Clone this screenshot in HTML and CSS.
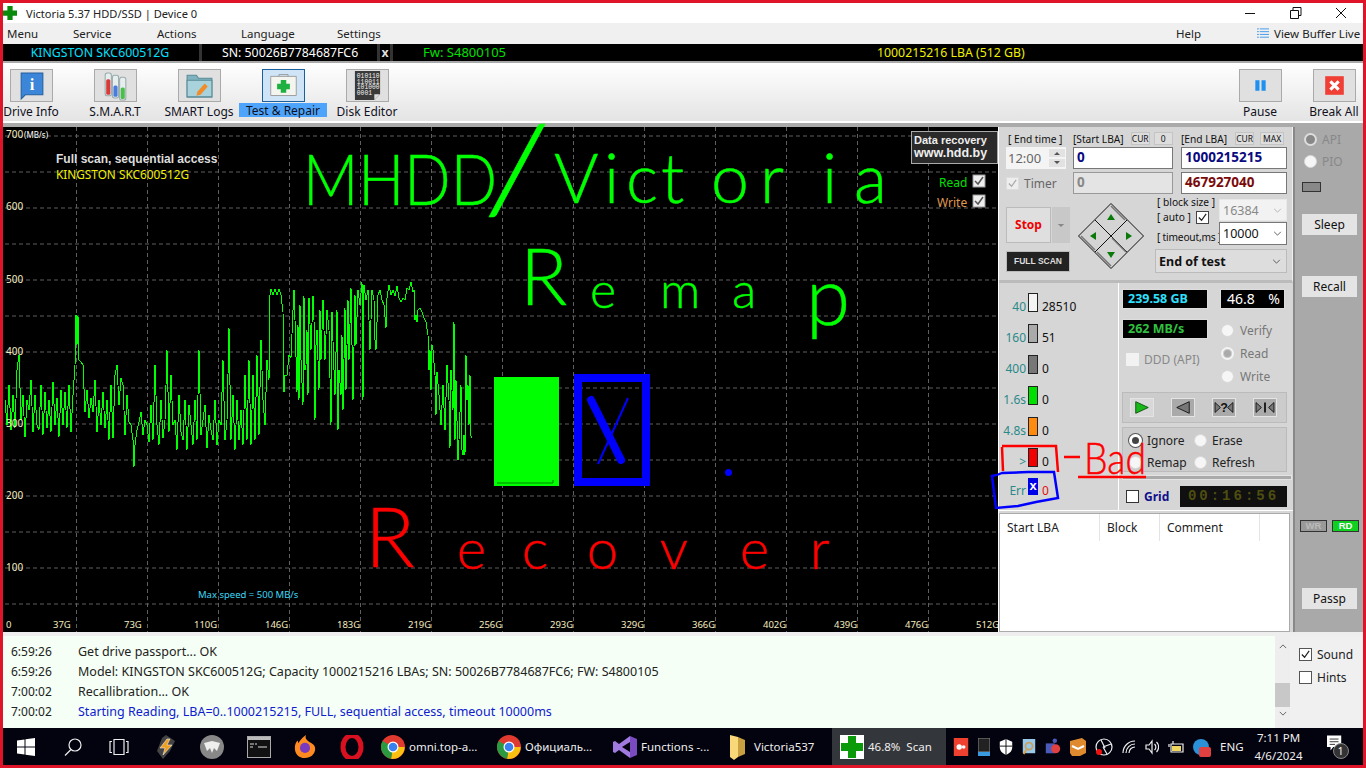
FILE: index.html
```html
<!DOCTYPE html>
<html lang="en">
<head>
<meta charset="utf-8">
<title>Victoria 5.37 HDD/SSD</title>
<link rel="stylesheet" href="styles.css">
</head>
<body>
<div class="titlebar">
  <svg class="appicon" viewBox="0 0 16 16"><path class="cross-dk" d="M5 0h6v5h5v6h-5v5H5v-5H0V5h5z"/></svg>
  <span class="title">Victoria 5.37 HDD/SSD | Device 0</span>
  <svg class="winbtns" viewBox="0 0 140 20"><path class="wb" d="M22 10.500h10M70 7.500V4.500h8v8h-3M67.500 7.500h8v8h-8zM113 5l10 10M123 5l-10 10"/></svg>
</div>
<div class="menubar">
  <span class="m m1">Menu</span><span class="m m2">Service</span><span class="m m3">Actions</span><span class="m m4">Language</span><span class="m m5">Settings</span>
  <span class="m help">Help</span>
  <svg class="listicon" viewBox="0 0 13 13"><path class="li" d="M0 1.500h2M3 1.500h10M0 4.500h2M3 4.500h10M0 7.500h2M3 7.500h10M0 10.500h2M3 10.500h10"/></svg>
  <span class="m vbl">View Buffer Live</span>
</div>
<div class="infobar">
  <span class="i-model">KINGSTON SKC600512G</span>
  <span class="i-sn">SN: 50026B7784687FC6</span>
  <span class="i-x">x</span>
  <span class="i-fw">Fw: S4800105</span>
  <span class="i-lba">1000215216 LBA (512 GB)</span>
</div>
<div class="rule"></div>
<div class="toolbar">
  <div class="tool t1"><div class="tbtn"><svg viewBox="0 0 30 30"><path class="ic-bubble" d="M5 3h21v21H9l-4 4z"/><text x="15.500" y="19" class="ic-i">i</text></svg></div><span>Drive Info</span></div>
  <div class="tool t2"><div class="tbtn"><svg viewBox="0 0 30 30"><rect class="tube" x="5" y="3" width="6" height="22" rx="2"/><rect class="tube-r" x="6" y="9" width="4" height="15" rx="1.500"/><rect class="tube" x="12" y="5" width="6" height="22" rx="2"/><rect class="tube-b" x="13" y="15" width="4" height="11" rx="1.500"/><rect class="tube" x="19" y="7" width="6" height="22" rx="2"/><rect class="tube-g" x="20" y="17" width="4" height="11" rx="1.500"/></svg></div><span>S.M.A.R.T</span></div>
  <div class="tool t3"><div class="tbtn"><svg viewBox="0 0 30 30"><path class="fold-b" d="M3 5h9l2 3h13v18H3z"/><path class="fold-f" d="M3 10h24v16H3z"/><path class="pencil" d="M20 13l3 3-7 8-4 1 1-4z"/></svg></div><span>SMART Logs</span></div>
  <div class="tool t4"><div class="tbtn sel"><svg viewBox="0 0 34 30"><path class="kit" d="M3 5h28v21H3z"/><path class="kit-h" d="M12 5V3h10v2"/><path class="kit-c" d="M14 9h6v4h4v6h-4v4h-6v-4h-4v-6h4z"/></svg></div><span class="lbl-sel">Test &amp; Repair</span></div>
  <div class="tool t5"><div class="tbtn"><svg viewBox="0 0 32 32"><path class="chip" d="M3 1h26v24l-6 6H3z"/><text class="chip-t" x="5" y="8">010110</text><text class="chip-t" x="5" y="14">110011</text><text class="chip-t" x="5" y="20">101000</text><text class="chip-t" x="5" y="26">0001</text><path class="chip-c" d="M23 31v-6h6z"/></svg></div><span>Disk Editor</span></div>
  <div class="tool t6"><div class="tbtn"><svg viewBox="0 0 30 30"><path class="pause" d="M10 10h4v10h-4zM16 10h4v10h-4z"/></svg></div><span>Pause</span></div>
  <div class="tool t7"><div class="tbtn"><svg viewBox="0 0 30 30"><rect class="brk" x="6" y="6" width="18" height="18"/><path class="brk-x" d="M11 11l8 8M19 11l-8 8"/></svg></div><span>Break All</span></div>
</div>
<div class="toolrule"></div>
<div class="main">
  <div class="chart">
    <svg class="chartsvg" viewBox="3 127 995 505">
      <path class="grid" d="M5 136H998M5 172H998M5 208H998M5 244H998M5 280H998M5 316H998M5 352H998M5 388H998M5 424H998M5 460H998M5 496H998M5 532H998M5 568H998M5 604H998M76.500 127V632M147.500 127V632M218.500 127V632M289.500 127V632M360.500 127V632M431.500 127V632M502.500 127V632M573.500 127V632M644.500 127V632M715.500 127V632M786.500 127V632M857.500 127V632M928.500 127V632"/>
      <polyline class="graph" points="5,400 7,425 9,385 11,430 13,395 15,428 17,370 19,355 21,420 23,395 25,437 27,400 29,410 31,380 33,432 35,395 37,425 39,430 41,385 43,435 45,392 47,428 49,400 51,432 53,382 55,425 57,398 59,437 61,390 63,425 65,392 67,428 69,385 71,432 73,395 75,365 76,315 77,345 78,316 79,360 81,362 83,365 85,412 87,390 89,418 91,398 93,412 95,380 97,432 99,400 101,425 103,392 105,428 107,400 109,440 111,385 113,438 115,375 117,365 119,405 121,378 123,385 125,435 127,395 129,422 131,425 133,440 134,467 135,445 137,430 139,422 141,412 143,435 145,420 147,425 149,442 151,405 153,440 155,365 157,425 159,445 161,400 163,438 165,420 167,350 169,432 171,375 173,425 175,420 177,450 179,395 181,432 183,440 185,400 187,450 189,405 191,425 193,445 195,400 197,440 199,350 201,435 203,420 205,405 207,448 209,415 211,430 213,440 215,400 217,445 219,420 221,425 223,360 225,440 227,420 229,328 231,440 233,395 235,450 237,400 239,440 241,410 243,445 245,375 247,440 249,360 251,445 253,375 255,440 257,355 259,435 261,340 263,400 265,425 267,360 269,380 270,295 271,289 273,295 275,289 277,295 279,289 281,295 283,312 284,392 285,375 287,375 289,355 291,358 293,310 294,290 295,320 297,392 298,325 299,400 300,305 301,360 303,405 304,296 305,370 306,365 307,330 308,395 309,298 311,350 313,296 314,320 315,420 316,345 317,330 319,390 320,310 321,360 323,300 325,360 327,310 329,330 331,425 332,312 334,370 335,395 337,310 338,430 339,370 341,395 342,335 343,410 345,308 346,390 348,300 349,360 351,288 353,400 355,295 356,345 358,290 360,305 362,282 363,400 364,285 366,300 368,290 370,350 372,290 374,300 375,340 376,350 378,295 380,290 382,300 384,305 386,328 387,298 389,285 391,295 393,290 395,296 397,286 399,298 401,302 403,298 405,300 407,288 409,290 411,282 413,292 414,290 415,320 416,315 417,322 418,310 420,308 422,312 424,318 426,322 428,335 429,370 430,350 431,390 432,345 433,350 435,375 436,415 437,372 439,395 441,425 443,385 445,430 447,365 449,400 450,448 451,370 453,410 454,322 455,440 456,380 458,460 459,440 461,385 462,450 463,455 464,435 465,455 466,355 467,400 468,385 469,425 470,375 471,436 472,438"/>
      <text class="yl" x="6" y="138">700</text><text class="yu" x="24" y="138">(MB/s)</text>
      <text class="yl" x="6" y="210">600</text><text class="yl" x="6" y="283">500</text><text class="yl" x="6" y="355">400</text><text class="yl" x="6" y="427">300</text><text class="yl" x="6" y="499">200</text><text class="yl" x="6" y="571">100</text>
      <g class="xl"><text x="6" y="628">0</text><text x="53" y="628">37G</text><text x="124" y="628">73G</text><text x="194" y="628">110G</text><text x="265" y="628">146G</text><text x="337" y="628">183G</text><text x="408" y="628">219G</text><text x="479" y="628">256G</text><text x="550" y="628">293G</text><text x="621" y="628">329G</text><text x="692" y="628">366G</text><text x="763" y="628">402G</text><text x="834" y="628">439G</text><text x="905" y="628">476G</text><text x="976" y="628">512G</text></g>
      <text class="c-head" x="56" y="163">Full scan, sequential access</text>
      <text class="c-model" x="56" y="179">KINGSTON SKC600512G</text>
      <text class="c-max" x="198" y="598">Max speed = 500 MB/s</text>
      <rect class="dr-box" x="911.500" y="131.500" width="86" height="32"/>
      <text class="dr-t" x="914" y="144">Data recovery</text>
      <text class="dr-u" x="914" y="157">www.hdd.by</text>
      <text class="c-read" x="939" y="187">Read</text>
      <text class="c-write" x="937" y="207">Write</text>
      <rect class="c-chk" x="973" y="175" width="12" height="12"/><path class="c-tick" d="M975 181l3 3 5-7"/>
      <rect class="c-chk" x="973" y="195" width="12" height="12"/><path class="c-tick" d="M975 201l3 3 5-7"/>
    </svg>
  </div>

  <div class="panel">
    <div class="ctl">
      <div class="ctl-grid">
        <div class="lab lab-t">[ End time ]</div>
        <div class="lab-row"><span class="lab">[Start LBA]</span><span class="minibtn mb-a">CUR</span><span class="minibtn mb-b">0</span></div>
        <div class="lab-row"><span class="lab">[End LBA]</span><span class="minibtn mb-c">CUR</span><span class="minibtn mb-d">MAX</span></div>

        <div class="time"><span class="time-v">12:00</span><span class="spin"><svg viewBox="0 0 16 18"><path class="sp-bg" d="M0 0h16v8H0zM0 10h16v8H0z"/><path class="sp-ar" d="M5 6l3-3 3 3zM5 12h6l-3 3z"/></svg></span></div>
        <div class="inp navy">0</div>
        <div class="inp navy">1000215215</div>

        <div class="timer"><span class="cb cb-dis"><svg viewBox="0 0 12 12"><path class="tick-dis" d="M2 6l3 3 5-7"/></svg></span><span class="timer-t">Timer</span></div>
        <div class="inp dis">0</div>
        <div class="inp maroon">467927040</div>
      </div>
      <div class="ctl-low">
        <div class="stopcol">
          <div class="stoprow"><div class="stop">Stop</div><div class="stopdd"><svg viewBox="0 0 10 6"><path class="dd-ar" d="M1 1h8L5 5z"/></svg></div></div>
          <div class="fullscan">FULL SCAN</div>
        </div>
        <svg class="diamond" viewBox="0 0 66 66">
          <path class="d-fill" d="M33 0.500L65.500 33 33 65.500 0.500 33z"/>
          <path class="d-line" d="M33 0.500L65.500 33 33 65.500 0.500 33zM17 17l32 32M49 17L17 49"/>
          <path class="d-shade" d="M33 3L47 17M3 33l14 14M34 35l14 14M19 49l14 14"/>
          <path class="d-ar" d="M33 11l4 6h-8zM12 33l6-4v8zM54 33l-6-4v8zM33 55l-4-6h8z"/>
        </svg>
        <div class="blockcol">
          <div class="blockgrid">
            <div class="blab"><span class="lab">[ block size ]</span><span class="autorow"><span class="lab">[ auto ]</span><span class="cb"><svg viewBox="0 0 12 12"><path class="tick" d="M2 6l3 3 5-7"/></svg></span></span><span class="lab lab-to">[ timeout,ms ]</span></div>
            <div class="selcol">
              <div class="sel-s sel-dis"><span class="sel-v">16384</span><svg class="chev" viewBox="0 0 10 6"><path class="chev-p" d="M1 1l4 4 4-4"/></svg></div>
              <div class="sel-s"><span>10000</span><svg class="chev" viewBox="0 0 10 6"><path class="chev-p dk" d="M1 1l4 4 4-4"/></svg></div>
            </div>
          </div>
          <div class="sel-end"><span>End of test</span><svg class="chev" viewBox="0 0 10 6"><path class="chev-p dk" d="M1 1l4 4 4-4"/></svg></div>
        </div>
      </div>
    </div>

    <div class="mid">
      <div class="stats">
        <div class="st"><span class="st-l">40</span><span class="sw s-w"></span><span class="st-v">28510</span></div>
        <div class="st"><span class="st-l">160</span><span class="sw s-g1"></span><span class="st-v">51</span></div>
        <div class="st"><span class="st-l">400</span><span class="sw s-g2"></span><span class="st-v">0</span></div>
        <div class="st"><span class="st-l">1.6s</span><span class="sw s-gr"></span><span class="st-v">0</span></div>
        <div class="st"><span class="st-l">4.8s</span><span class="sw s-or"></span><span class="st-v">0</span></div>
        <div class="st"><span class="st-l">&gt;</span><span class="sw s-rd"></span><span class="st-v">0</span></div>
        <div class="st st-err"><span class="st-l">Err</span><span class="sw s-bl">x</span><span class="st-v red">0</span></div>
      </div>
      <div class="opts">
        <div class="ro-a"><div class="lcd lcd-gb">239.58 GB</div><div class="lcd lcd-pct"><span>46.8</span><span>%</span></div></div>
        <div class="ro-b">
          <div class="ro-bl"><div class="lcd lcd-sp">262 MB/s</div><div class="ddd"><span class="cb cb-w"></span><span>DDD (API)</span></div></div>
          <div class="ro-br">
            <div class="rad-row"><span class="rad rad-w"></span><span>Verify</span></div>
            <div class="rad-row"><span class="rad rad-dot"></span><span>Read</span></div>
            <div class="rad-row"><span class="rad rad-w"></span><span>Write</span></div>
          </div>
        </div>
        <div class="playgrp">
          <div class="pb pb-on"><svg viewBox="0 0 24 19"><path class="pl-g" d="M5 3l14 6.500L5 16z"/></svg></div>
          <div class="pb"><svg viewBox="0 0 24 19"><path class="pl-d" d="M19 3L5 9.500 19 16z"/></svg></div>
          <div class="pb"><svg viewBox="0 0 24 19"><path class="pl-d" d="M2 4l6 5.500L2 15zM22 4l-6 5.500 6 5.500z"/><text class="pl-q" x="12" y="15">?</text></svg></div>
          <div class="pb"><svg viewBox="0 0 24 19"><path class="pl-d" d="M2 4l6 5.500L2 15zM22 4l-6 5.500 6 5.500z"/><path class="pl-b" d="M12 4v11"/></svg></div>
        </div>
        <div class="modegrp">
          <div class="rad2"><span class="rad rad-on"></span><span>Ignore</span></div>
          <div class="rad2"><span class="rad rad-w"></span><span>Erase</span></div>
          <div class="rad2"><span class="rad rad-w"></span><span>Remap</span></div>
          <div class="rad2"><span class="rad rad-w"></span><span>Refresh</span></div>
        </div>
        <div class="progress"></div>
        <div class="gridrow"><span class="cb cb-w2"></span><span class="gridlab">Grid</span><span class="led">00:16:56</span></div>
      </div>
    </div>

    <div class="table">
      <div class="th th1">Start LBA</div><div class="th th2">Block</div><div class="th th3">Comment</div><div class="th th4"></div>
    </div>
  </div>

  <div class="strip">
    <div class="s-rad s-rad1"><span class="rad rad-dot2"></span><span>API</span></div>
    <div class="s-rad"><span class="rad rad-w"></span><span>PIO</span></div>
    <div class="s-led"></div>
    <div class="s-btn b-sleep">Sleep</div>
    <div class="s-btn b-recall">Recall</div>
    <div class="wr-rd"><span class="wr">WR</span><span class="rd">RD</span></div>
    <div class="s-btn b-passp">Passp</div>
  </div>
</div>
<div class="gap"></div>
<div class="logrow">
  <div class="log">
    <div class="log-lines">
      <div class="ln"><span class="tm">6:59:26</span><span>Get drive passport... OK</span></div>
      <div class="ln"><span class="tm">6:59:26</span><span>Model: KINGSTON SKC600512G; Capacity 1000215216 LBAs; SN: 50026B7784687FC6; FW: S4800105</span></div>
      <div class="ln"><span class="tm">7:00:02</span><span>Recallibration... OK</span></div>
      <div class="ln blue"><span class="tm tm-k">7:00:02</span><span>Starting Reading, LBA=0..1000215215, FULL, sequential access, timeout 10000ms</span></div>
    </div>
    <div class="scroll"><svg class="sc-up" viewBox="0 0 10 6"><path class="chev-p dk" d="M1 5l4-4 4 4"/></svg><div class="thumb"></div><svg class="sc-dn" viewBox="0 0 10 6"><path class="chev-p dk" d="M1 1l4 4 4-4"/></svg></div>
  </div>
  <div class="sound">
    <div class="snd"><span class="cb"><svg viewBox="0 0 12 12"><path class="tick" d="M2 6l3 3 5-7"/></svg></span><span>Sound</span></div>
    <div class="snd"><span class="cb"></span><span>Hints</span></div>
  </div>
</div>
<div class="taskbar">
  <div class="tk"><svg class="i18" viewBox="0 0 18 18"><path class="wh" d="M0 2.500L7.500 1.500V8.500H0zM8.500 1.300L18 0V8.500H8.500zM0 9.500H7.500V16.500L0 15.500zM8.500 9.500H18V18L8.500 16.700z"/></svg></div>
  <div class="tk"><svg class="i18" viewBox="0 0 18 18"><circle class="st1" cx="11" cy="7" r="6"/><path class="st1" d="M7 11.500L1 17.500"/></svg></div>
  <div class="tk"><svg class="i20" viewBox="0 0 20 18"><path class="st1" d="M5 1.500h10v15H5zM3 3.500H1v11h2M17 3.500h2v11h-2"/></svg></div>
  <div class="tk"><svg class="i22" viewBox="0 0 22 24"><path class="wa-b" d="M7 3l4-3 9 6-5 10-7 8-6-8z"/><path class="wa-o" d="M12 4L5 13h5l-2 7 9-10h-5l3-6z"/></svg></div>
  <div class="tk"><svg class="i24" viewBox="0 0 24 24"><circle class="ball" cx="12" cy="12" r="12"/><path class="ball-w" d="M4 8l8-2 8 2-3 8-3-3-2 5-2-5-3 3z"/></svg></div>
  <div class="tk"><svg class="i24" viewBox="0 0 24 24"><rect class="cmd" x="0.500" y="1.500" width="23" height="21"/><path class="cmd-h" d="M1 2h22v3H1z"/><path class="cmd-t" d="M3 9h4M8 9h2M3 12h3M11 12h9"/></svg></div>
  <div class="tk"><svg class="i24" viewBox="0 0 24 26"><path class="ff-o" d="M12 25C5 25 1 20 1 14c0-3 1-6 3-8l1 3c1-3 4-6 8-9-1 3 0 5 3 7 3 2 7 3 7 8 0 6-5 10-11 10z"/><circle class="ff-p" cx="12" cy="14" r="5.500"/></svg></div>
  <div class="tk"><svg class="i24" viewBox="0 0 24 24"><ellipse class="op-o" cx="12" cy="12" rx="9" ry="11.500"/></svg></div>
  <div class="tk tk-app tw-1"><svg class="i24" viewBox="0 0 24 24"><use href="#chrome"/></svg><span>omni.top-a...</span></div>
  <div class="tk tk-app tw-2"><svg class="i24" viewBox="0 0 24 24"><use href="#chrome"/></svg><span>Официаль...</span></div>
  <div class="tk tk-app tw-3"><svg class="i24" viewBox="0 0 24 24"><path class="vs-d" d="M17 1l7 3v16l-7 3z"/><path class="vs-l" d="M17 1v6l-8 5 8 5v6L6 15l-4 3-2-1V7l2-1 4 3z"/></svg><span>Functions -...</span></div>
  <div class="tk tk-app tw-4"><svg class="i24" viewBox="0 0 16 26"><path class="fd-d" d="M9 3l7 3v14l-7 3z"/><path class="fd-l" d="M1 1l8 2v20l-4 3-4-3z"/></svg><span>Victoria537</span></div>
  <div class="tk tk-app tk-act"><span class="act-ic"><svg viewBox="0 0 22 22"><path class="act-c" d="M7 0h8v7h7v8h-7v7H7v-7H0V7h7z"/></svg></span><span>46.8%&nbsp; Scan</span></div>
  <div class="tray">
    <svg class="t16" viewBox="0 0 16 20"><rect class="tr-r" width="16" height="20"/><circle class="wh" cx="6" cy="10" r="3"/><circle class="wh" cx="11" cy="10" r="2"/></svg>
    <svg class="t12" viewBox="0 0 12 18"><rect class="tr-k" width="12" height="14"/><rect class="tr-bl" y="14" width="12" height="4"/></svg>
    <svg class="t14" viewBox="0 0 14 18"><path class="wh" d="M7 0l7 3v6c0 5-3 7-7 9-4-2-7-4-7-9V3z"/><path class="tr-ln" d="M7 0v18M0 8h14"/></svg>
    <svg class="t14" viewBox="0 0 14 18"><rect class="tr-sky" width="14" height="16"/><circle class="tr-ring" cx="7" cy="8" r="4"/><path class="tr-or" d="M4 12l-3 5"/></svg>
    <svg class="t16" viewBox="0 0 16 20"><rect class="tr-tm" y="6" width="10" height="11"/><circle class="tr-rr" cx="11" cy="12" r="5"/><circle class="tr-tm" cx="10" cy="3" r="2.500"/></svg>
    <svg class="t16" viewBox="0 0 16 18"><path class="tr-orf" d="M0 3l12-3 4 3v12l-6 3H2l-2-3z"/><path class="tr-wl" d="M2 8l6 3 6-3"/></svg>
    <svg class="t18" viewBox="0 0 18 20"><circle class="st1" cx="9" cy="10" r="8"/><path class="st1" d="M6 3l4 8M16 7l-8 3M12 17L8 10"/><circle class="tr-rd" cx="4" cy="15" r="3"/></svg>
    <svg class="t14" viewBox="0 0 14 14"><path class="st1" d="M1 13a12 12 0 0 1 12-12M4 13a9 9 0 0 1 9-9M7 13a6 6 0 0 1 6-6"/></svg>
    <svg class="t14" viewBox="0 0 14 16"><path class="st1" d="M1 6h3l3-4v12l-3-4H1zM9.500 5a4 4 0 0 1 0 6M11.500 3a7 7 0 0 1 0 10"/></svg>
    <svg class="t16" viewBox="0 0 16 14"><path class="st1" d="M3 4h12v8H3z"/><path class="tr-fy" d="M4 6h9v5H4z"/><path class="st1" d="M5 1v3M1 4v3"/></svg>
    <svg class="t18" viewBox="0 0 18 20"><circle class="tr-cb" cx="8" cy="10" r="8"/><rect class="tr-rb" x="6" y="10" width="12" height="10" rx="2"/></svg>
    <span class="eng">ENG</span>
    <div class="clock"><span>7:11 PM</span><span>4/6/2024</span></div>
    <div class="notif"><svg viewBox="0 0 18 18"><path class="wh" d="M0 0h16v13H7l-3 4v-4H0z"/><path class="tr-nl" d="M3 4h10M3 7h10M3 10h6"/></svg><span class="badge">1</span></div>
  </div>
</div>

<svg class="annot" viewBox="0 0 1366 768">
  <symbol id="chrome" viewBox="0 0 24 24"><circle class="ch-r" cx="12" cy="12" r="12"/><path class="ch-y" d="M12 12h11.700A12 12 0 0 1 10 23.800z"/><path class="ch-g" d="M12 12L10 23.800A12 12 0 0 1 1.600 6z"/><circle class="wh" cx="12" cy="12" r="5.500"/><circle class="ch-b" cx="12" cy="12" r="4.300"/></symbol>

  <g class="hw hw-green">
    <text class="hw70" x="303" y="205" textLength="194" lengthAdjust="spacingAndGlyphs">MHDD</text>
    <text class="hw120" x="483" y="212" textLength="68" lengthAdjust="spacingAndGlyphs">/</text>
    <text class="hw68" x="554 604 626 661 711 760 822 854" y="203">Victoria</text>
    <text class="hw78" x="520" y="305">R</text>
    <text class="hw50" x="590 660 732" y="308">ema</text>
    <text class="hw80" x="806" y="325">p</text>
  </g>
  <g class="hw hw-red">
    <text class="hw82" x="365" y="567">R</text>
    <text class="hw56" x="457 522 587 660 740 810" y="569">ecover</text>
    <text class="hw44" x="1084" y="474" textLength="62" lengthAdjust="spacingAndGlyphs">Bad</text>
  </g>
  <path class="red-s" d="M1002 447l1 24M1002 446h54l2 26M1064 457h16M1078 477h68"/>
  <path class="blue-s" d="M1002 473c-4 2-10 3-10 3l4 32 22-2 18-4 22-4-4-26-26 0z"/>
  <rect class="big-g" x="494" y="377" width="65" height="109"/>
  <path class="big-g2" d="M497 483h56v-3"/>
  <rect class="big-b" x="578" y="378" width="68" height="104"/>
  <path class="x-thick" d="M591 400l30 60"/>
  <path class="x-thin" d="M628 398l-30 66"/>
  <circle class="dot-b" cx="728.500" cy="472.500" r="3.500"/>
</svg>
</body>
</html>
```
FILE: styles.css
```css
* { box-sizing: border-box; }
html, body { margin: 0; height: 100%; }
body {
  width: 1366px; height: 768px; overflow: hidden; padding: 3px;
  background: #e01428; display: flex; flex-direction: column; position: relative;
  font: 12px "Noto Sans", "Liberation Sans", sans-serif; color: #111;
}
svg { display: block; }

.titlebar { height: 20px; background: #fff; display: flex; align-items: center; position: relative; }
.appicon { width: 14px; height: 14px; margin-left: 0; }
.cross-dk { fill: #0a8a0a; }
.title { margin-left: 9px; color: #222; font-size: 11.100px; }
.winbtns { width: 140px; height: 20px; margin-left: auto; margin-right: 0; }
.wb { fill: none; stroke: #111; stroke-width: 1; }

.menubar { height: 21px; background: #f0f0f0; display: flex; align-items: center; }
.m { color: #222; font-size: 11.500px; }
.m1 { margin-left: 4px; width: 66px; }
.m2 { width: 84px; }
.m3 { width: 84px; }
.m4 { width: 96px; }
.m5 { width: 839px; }
.help { width: 81px; }
.listicon { width: 12px; height: 13px; margin-right: 5px; }
.li { stroke: #3b97ea; stroke-width: 1; fill: none; }

.infobar { height: 17px; background: #000; display: flex; align-items: center; font-size: 12.300px; }
.infobar span { height: 17px; line-height: 17px; }
.i-model { width: 199px; text-align: center; color: #00e0ff; border-right: 3px solid #333; padding-right: 2px; }
.i-sn { width: 178px; color: #fff; padding-left: 20px; border-right: 3px solid #333; white-space: nowrap; }
.i-x { width: 13px; color: #ddd; text-align: center; font-weight: 700; border-right: 3px solid #333; }
.i-fw { width: 230px; color: #00e000; padding-left: 30px; font-size: 13px; }
.i-lba { color: #f0f000; margin-left: 254px; }

.rule { height: 2px; background: #a9a9a9; }
.toolbar { height: 58px; background: linear-gradient(#fff, #e4e4e4); display: flex; }
.tool { display: flex; flex-direction: column; align-items: center; width: 84px; flex: none; padding-top: 6px; color: #112; font-size: 12px; }
.tool > span { height: 16px; line-height: 17px; white-space: nowrap; margin-top: 1px; }
.t1 { margin-left: -14px; }
.t6 { margin-left: 809px; }
.t7 { margin-left: -10px; }
.tbtn { width: 43px; height: 33px; border: 1px solid #aaa; background: #e0e0e0; display: flex; justify-content: center; align-items: center; }
.tbtn svg { width: 31px; height: 31px; }
.tbtn.sel { background: #cfe4f6; border-color: #1a5f9e; }
.tool > .lbl-sel { background: #4ea4fb; width: 88px; text-align: center; margin-top: 1px; height: 14px; line-height: 15px; }
.ic-bubble { fill: #3b86d8; stroke: #245f9e; }
.ic-i { fill: #fff; font: 700 16px "Liberation Serif", serif; text-anchor: middle; }
.tube { fill: #e6eef0; stroke: #9aa; }
.tube-r { fill: #d83a3a; } .tube-b { fill: #4a7be0; } .tube-g { fill: #4ac04a; }
.fold-b { fill: #7fb3bf; stroke: #5a8a96; }
.fold-f { fill: #a8d3dc; stroke: #5a8a96; }
.pencil { fill: #f28c28; }
.kit { fill: #f5f5f0; stroke: #999; }
.kit-h { fill: none; stroke: #999; }
.kit-c { fill: #1eb040; }
.chip { fill: #3a3a3a; }
.chip-t { fill: #f4f4f4; font: 6.500px "Liberation Mono", monospace; }
.chip-c { fill: #ddd; }
.pause { fill: #1e90f0; }
.brk { fill: #f04035; }
.brk-x { stroke: #fff; stroke-width: 3; }

.toolrule { height: 6px; background: linear-gradient(#fff 0 2px, #aaa 2px 100%); }
.main { height: 505px; display: flex; }
.chart { width: 995px; background: #000; }
.chartsvg { width: 995px; height: 505px; }
.grid { stroke: #5f5f5f; stroke-width: 1; stroke-dasharray: 4 3; fill: none; }
.graph { fill: none; stroke: #00ff00; stroke-width: 1; shape-rendering: crispEdges; }
.yl { fill: #f4ecc0; font: 10px "Noto Sans", sans-serif; }
.yu { fill: #fff; font: 8px "Noto Sans", sans-serif; }
.xl text { fill: #f4ecc0; font: 9.500px "Noto Sans", sans-serif; }
.c-head { fill: #ddd; font: 700 12px "Liberation Sans", sans-serif; }
.c-model { fill: #f0f000; font: 11.800px "Noto Sans", sans-serif; }
.c-max { fill: #3cd8f8; font: 9.500px "Noto Sans", sans-serif; }
.dr-box { fill: #2a2a2a; stroke: #aaa; }
.dr-t, .dr-u { fill: #eee; font: 700 11px "Liberation Sans", sans-serif; }
.dr-u { font-size: 12.500px; }
.c-read { fill: #00e000; font: 12px "Noto Sans", sans-serif; }
.c-write { fill: #e09a50; font: 12px "Noto Sans", sans-serif; }
.c-chk { fill: #eee; stroke: #999; }
.c-tick { fill: none; stroke: #555; stroke-width: 1.500; }

.panel { width: 295px; background: #d6d6d6; display: flex; flex-direction: column; border-left: 1px solid #fff; }
.ctl { height: 156px; padding: 5px 0 0 7px; border-bottom: 3px solid #bbb; border-right: 1px solid #eee; flex: none; }
.ctl-grid { display: grid; grid-template-columns: 67px 108px 106px; grid-template-rows: 15px 25px 24px; }
.lab { font-size: 10.200px; color: #111; white-space: nowrap; }
.lab-t { padding-left: 2px; line-height: 15px; }
.lab-row { display: flex; align-items: center; height: 13px; }
.minibtn { height: 13px; border: 1px solid #c4c4c4; background: #ddd; font-size: 8.500px; line-height: 11px; text-align: center; color: #111; }
.mb-a { width: 19px; margin-left: 7px; }
.mb-b { width: 19px; margin-left: 4px; }
.mb-c { width: 19px; margin-left: 8px; }
.mb-d { width: 24px; margin-left: 6px; }
.time { width: 60px; height: 22px; background: #f4f4f4; display: flex; align-items: center; justify-content: space-between; }
.time-v { color: #666; font-size: 13px; padding-left: 2px; }
.spin { width: 16px; height: 18px; margin-right: 1px; }
.sp-bg { fill: #e2e2e2; } .sp-ar { fill: #555; }
.inp { width: 100px; height: 22px; border: 1px solid #777; background: #fff; font: 700 13.500px/19px "Noto Sans", sans-serif; padding-left: 3px; }
.ctl-grid > .inp:nth-child(6), .ctl-grid > .inp:nth-child(9) { width: 106px; }
.navy { color: #0a0a80; }
.maroon { color: #7a0a0a; }
.inp.dis { background: #e4e4e4; color: #888; border-color: #999; }
.timer { display: flex; align-items: center; height: 22px; }
.cb { width: 13px; height: 13px; background: #fff; border: 1px solid #444; flex: none; display: block; }
.cb-dis { background: #eee; border-color: #ddd; }
.tick { fill: none; stroke: #222; stroke-width: 1.300; }
.tick-dis { fill: none; stroke: #aaa; stroke-width: 1.300; }
.timer-t { color: #666; margin-left: 5px; }
.ctl-low { display: flex; margin-top: 3px; height: 80px; }
.stopcol { width: 64px; padding-top: 8px; }
.stoprow { display: flex; height: 36px; gap: 1px; }
.stop { width: 45px; background: #dfdfdf; border: 1px solid #bbb; color: #f00000; font-weight: 700; font-size: 12px; line-height: 34px; text-align: center; }
.stopdd { width: 18px; background: #c8c8c8; display: flex; align-items: center; justify-content: center; }
.stopdd svg { width: 8px; height: 5px; }
.dd-ar { fill: #888; }
.fullscan { margin-top: 8px; height: 21px; background: #222; border: 1px solid #bbb; color: #ddd; font: 700 8.500px/19px "Liberation Sans", sans-serif; text-align: center; }
.diamond { width: 66px; height: 66px; margin: 4px 0 0 8px; flex: none; }
.d-fill { fill: #d4d4d4; }
.d-line { fill: none; stroke: #111; stroke-width: 1; }
.d-shade { fill: none; stroke: #777; stroke-width: 1.500; }
.d-ar { fill: #0a7a0a; }
.blockcol { margin-left: 11px; width: 132px; }
.blockgrid { display: grid; grid-template-columns: 64px 68px; height: 49px; }
.blab { display: flex; flex-direction: column; margin: -4px 0 0 2px; }
.blab .lab { line-height: 14px; }
.autorow { display: flex; align-items: center; height: 14px; gap: 5px; margin-top: 1px; }
.autorow .cb { width: 13px; height: 13px; margin-top: 1px; }
.lab-to { margin-top: 6px; letter-spacing: -.2px; }
.selcol { display: flex; flex-direction: column; gap: 1px; }
.sel-s { height: 23px; width: 68px; display: flex; align-items: center; justify-content: space-between; background: #fff; border: 1px solid #777; padding: 0 4px 0 3px; font-size: 12.500px; }
.sel-dis { border-color: #e8e8e8; background: #f2f2f2; color: #888; height: 22px; }
.chev { width: 9px; height: 5px; flex: none; }
.chev-p { fill: none; stroke: #aaa; stroke-width: 1; }
.chev-p.dk { stroke: #444; }
.sel-end { height: 24px; margin-top: 1px; background: #ddd; border: 1px solid #bbb; display: flex; align-items: center; justify-content: space-between; padding: 0 5px 0 3px; font-weight: 700; font-size: 12.500px; }

.mid { height: 228px; display: flex; border-bottom: 1px solid #fff; flex: none; }
.stats { width: 120px; border-right: 1px solid #fff; padding-top: 10px; display: flex; flex-direction: column; gap: 12px; border-left: 1px solid #ccc; }
.st { display: flex; height: 19px; align-items: center; }
.st-err { height: 17px; margin-top: -1px; }
.st-l { width: 26px; text-align: right; color: #2a8a8a; font-size: 12px; margin-top: 7px; }
.sw { width: 10px; height: 19px; margin-left: 2px; border: 1px solid #222; flex: none; }
.s-w { background: #f4f4f4; } .s-g1 { background: #aaa; } .s-g2 { background: #777; }
.s-gr { background: #00e000; } .s-or { background: #ff8a10; } .s-rd { background: #f00000; }
.s-bl { background: #0000e8; border: 0; height: 17px; color: #fff; font: 700 13px/15px "Liberation Sans", sans-serif; text-align: center; }
.st-v { margin: 7px 0 0 4px; color: #111; font-size: 12px; }
.st-v.red { color: #e01010; }

.opts { width: 172px; padding: 6px 0 0 3px; }
.ro-a { display: flex; gap: 12px; }
.lcd { height: 20px; background: #000; border: 1px solid #ddd; font: 700 12.500px/18px "Noto Sans", sans-serif; padding-left: 5px; }
.lcd-gb { width: 86px; color: #30e0ff; }
.lcd-pct { width: 65px; color: #fff; font-weight: 400; font-size: 14px; display: flex; justify-content: space-between; padding: 0 4px 0 6px; }
.lcd-sp { width: 86px; color: #30c040; }
.ro-b { display: flex; margin-top: 10px; height: 69px; }
.ro-bl { width: 99px; padding-top: 0; }
.ddd { display: flex; align-items: center; margin: 12px 0 0 4px; color: #888; gap: 5px; }
.cb-w { background: #f2f2f2; border: 0; }
.ro-br { display: flex; flex-direction: column; }
.rad-row { display: flex; align-items: center; height: 23px; color: #777; gap: 6px; }
.rad { width: 13px; height: 13px; border-radius: 50%; background: #fff; flex: none; position: relative; display: block; }
.rad-w { background: #f6f6f6; border: 1px solid #d8d8d8; }
.rad-dot { background: #aaa; border: 2px solid #f4f4f4; box-shadow: 0 0 0 1px #ccc inset; }
.rad-dot2 { background: #888; border: 2px solid #ddd; }
.rad-on { background: #444; border: 3px solid #fff; box-shadow: 0 0 0 1px #555; }
.playgrp { margin-top: 4px; width: 165px; height: 31px; background: #ccc; border: 1px solid #bbb; display: flex; gap: 17px; padding: 5px 0 0 7px; }
.pb { width: 24px; height: 19px; background: #aaa; border: 1px solid #e4e4e4; }
.pb-on { background: #d8d8d8; }
.pb svg { width: 22px; height: 17px; }
.pl-g { fill: #18b818; stroke: #0a500a; }
.pl-d { fill: #777; stroke: #111; }
.pl-q { font: 700 14px "Liberation Sans", sans-serif; text-anchor: middle; fill: #111; }
.pl-b { stroke: #111; stroke-width: 2; }
.modegrp { margin-top: 4px; width: 165px; height: 45px; background: #ccc; border: 1px solid #bbb; display: grid; grid-template-columns: 65px 100px; grid-template-rows: 22px 22px; padding: 1px 0 0 6px; }
.rad2 { display: flex; align-items: center; gap: 5px; color: #222; }
.progress { margin-top: 3px; height: 5px; width: 170px; background: #aaa; border: 1px solid #e4e4e4; }
.gridrow { display: flex; align-items: center; margin-top: 6px; padding-left: 4px; height: 21px; }
.cb-w2 { border-color: #333; }
.gridlab { color: #10108a; font-weight: 700; margin-left: 5px; width: 36px; font-size: 12px; }
.led { width: 107px; height: 21px; background: #101010; color: #4e4e10; font: 700 14px/21px "Liberation Mono", monospace; text-align: center; letter-spacing: 3px; }
.table { flex: 1; margin-top: 2px; background: #fff; border: 1px solid #aaa; display: flex; margin-right: 3px; }
.th { height: 27px; line-height: 27px; padding-left: 7px; border-right: 1px solid #e4e4e4; color: #222; }
.th1 { width: 100px; } .th2 { width: 60px; } .th3 { width: 100px; } .th4 { flex: 1; border: 0; }

.strip { width: 70px; background: #a9a9a9; border-left: 2px solid #888; display: flex; flex-direction: column; }
.s-rad { display: flex; align-items: center; height: 22px; padding-left: 9px; gap: 5px; color: #888; }
.s-rad1 { margin-top: 1px; }
.s-led { width: 19px; height: 10px; background: #888; border: 1px solid #333; margin: 10px 0 0 7px; }
.s-btn { width: 55px; height: 21px; background: #e4e4e4; text-align: center; line-height: 21px; color: #111; margin-left: 7px; }
.b-sleep { margin-top: 22px; }
.b-recall { margin-top: 41px; }
.wr-rd { margin: 223px 0 0 5px; display: flex; gap: 5px; }
.wr, .rd { width: 27px; height: 12px; border: 1px solid #333; font: 700 9.500px/10px "Liberation Sans", sans-serif; text-align: center; color: #fff; }
.wr { background: #999; color: #bbb; }
.rd { background: #10d020; }
.b-passp { margin-top: 56px; }

.gap { height: 4px; background: #eee; }
.logrow { height: 92px; display: flex; }
.log { width: 1287px; background: #f5fff5; display: flex; padding-top: 6px; font-size: 12.500px; }
.log-lines { flex: 1; }
.ln { display: flex; height: 20px; line-height: 20px; color: #222; }
.tm { width: 75px; padding-left: 8px; color: #222; font-size: 12px; }
.blue { color: #1020d0; }
.tm-k { color: #222; }
.scroll { width: 15px; margin-top: -6px; background: #eee; display: flex; flex-direction: column; align-items: center; padding-top: 8px; }
.sc-up, .sc-dn { width: 8px; height: 5px; }
.thumb { width: 15px; height: 24px; background: #c8c8c8; margin-top: 34px; }
.sc-dn { margin-top: 4px; }
.sound { flex: 1; background: #f0f0f0; padding: 7px 0 0 9px; }
.snd { display: flex; align-items: center; gap: 5px; height: 23px; color: #222; }
.snd .cb { border-color: #555; }

.taskbar { height: 37px; background: #02030e; display: flex; align-items: center; color: #eee; font-size: 11.500px; }
.tk { width: 46.500px; height: 37px; display: flex; align-items: center; justify-content: center; flex: none; }
.tk-app { justify-content: flex-start; gap: 4px; padding-left: 6px; white-space: nowrap; }
.tw-1 { width: 116px; } .tw-2 { width: 116px; } .tw-3 { width: 120px; }
.tw-4 { width: 105px; gap: 9px; padding-left: 2px; }
.tk-act { width: 114px; background: #33363a; padding-left: 8px; margin-left: 0; }
.i18 { width: 18px; height: 18px; } .i20 { width: 20px; height: 18px; } .i22 { width: 22px; height: 24px; } .i24 { width: 24px; height: 24px; flex: none; }
.tw-4 .i24 { width: 16px; height: 26px; }
.act-ic { width: 24px; height: 24px; background: #fff; padding: 1px; flex: none; }
.act-c { fill: #0a9a0a; }
.wh { fill: #fff; }
.st1 { fill: none; stroke: #eee; stroke-width: 1.200; }
.wa-b { fill: #444; } .wa-o { fill: #f0a020; stroke: #eee; stroke-width: .6; }
.ball { fill: #888; } .ball-w { fill: #eee; }
.cmd { fill: #111; stroke: #aaa; } .cmd-h { fill: #bbb; } .cmd-t { stroke: #ddd; stroke-width: 1; }
.ff-o { fill: #ff8a20; } .ff-p { fill: #7a3ac0; }
.op-o { fill: none; stroke: #d81020; stroke-width: 5; }
.ch-r { fill: #e03a30; } .ch-y { fill: #fbc010; } .ch-g { fill: #2a9a40; } .ch-b { fill: #3a80f0; }
.vs-d { fill: #7a4ac0; } .vs-l { fill: #a07ae0; }
.fd-d { fill: #c8a040; } .fd-l { fill: #f8d878; }
.tray { display: flex; align-items: center; flex: 1; padding-left: 7px; gap: 9px; }
.t12 { width: 12px; height: 18px; } .t14 { width: 14px; height: 16px; } .t16 { width: 16px; height: 18px; } .t18 { width: 18px; height: 20px; }
.tr-r { fill: #f04030; } .tr-k { fill: #222; stroke: #888; } .tr-bl { fill: #3a9ae0; }
.tr-ln { stroke: #000; } .tr-sky { fill: #9ac8e8; } .tr-ring { fill: none; stroke: #c8a060; stroke-width: 2; } .tr-or { stroke: #e0a040; stroke-width: 2; }
.tr-tm { fill: #4a5ab8; } .tr-rr { fill: #e04040; }
.tr-orf { fill: #e08a30; } .tr-wl { fill: none; stroke: #fff; stroke-width: 2; }
.tr-rd { fill: #f01010; } .tr-fy { fill: #f0d860; }
.tr-cb { fill: #2a90d8; } .tr-rb { fill: #e04040; }
.eng { margin-left: 0; }
.clock { display: flex; flex-direction: column; align-items: center; width: 48px; margin-left: 2px; line-height: 18px; }
.notif { width: 22px; height: 24px; margin-left: 15px; position: relative; }
.notif svg { width: 16px; height: 17px; }
.tr-nl { stroke: #222; stroke-width: 1; }
.badge { position: absolute; right: 0; bottom: 0; width: 16px; height: 16px; border-radius: 50%; background: #333; border: 1px solid #888; font-size: 10px; line-height: 14px; text-align: center; color: #fff; }

.annot { position: absolute; left: 0; top: 0; width: 1366px; height: 768px; pointer-events: none; }
.hw text { font-family: "Lato", sans-serif; font-weight: 300; }
.hw-green { fill: #00ff00; stroke: #00ff00; stroke-width: .5; }
.hw-red { fill: #ff0000; stroke: #ff0000; stroke-width: .5; }
.hw70 { font-size: 70px; }
.hw68 { font-size: 68px; }
.hw120 { font-size: 120px; }
.hw78 { font-size: 78px; }
.hw50 { font-size: 50px; }
.hw80 { font-size: 80px; }
.hw82 { font-size: 82px; }
.hw56 { font-size: 56px; }
.hw44 { font-size: 44px; }
.red-s { fill: none; stroke: #ff0000; stroke-width: 2.500; }
.blue-s { fill: none; stroke: #0000ff; stroke-width: 2.500; }
.big-g { fill: #00ff00; }
.big-g2 { fill: none; stroke: #008000; }
.big-b { fill: none; stroke: #0000ff; stroke-width: 8; }
.x-thick { stroke: #0000ff; stroke-width: 8; stroke-linecap: round; }
.x-thin { stroke: #0000ff; stroke-width: 2; }
.dot-b { fill: #0000ff; }
```
